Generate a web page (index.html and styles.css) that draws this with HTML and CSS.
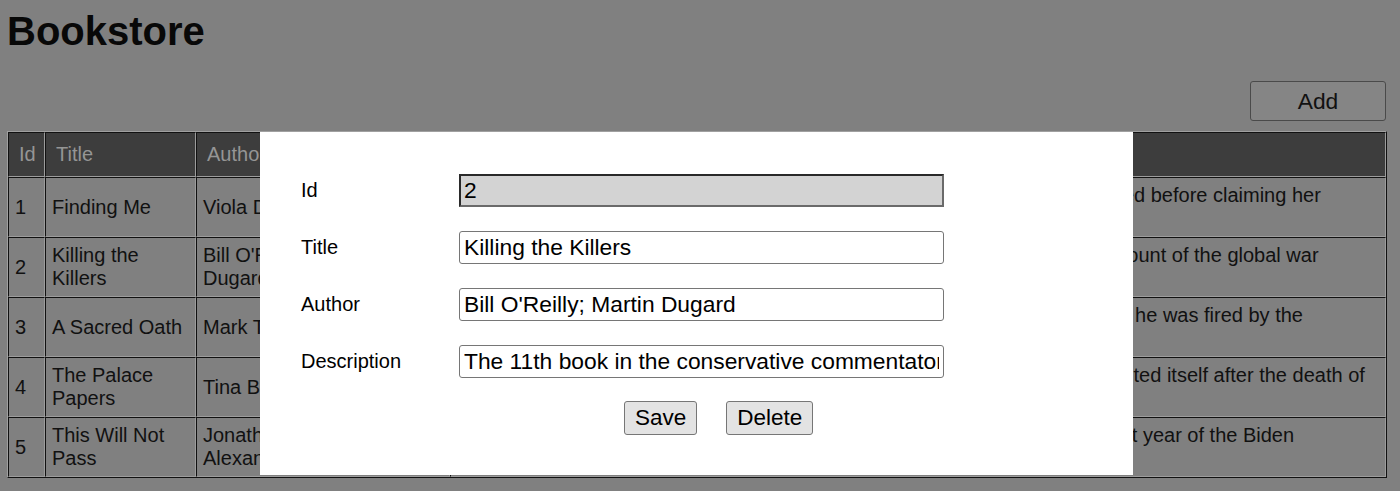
FILE: index.html
```html
<!DOCTYPE html>
<html lang="en">
<head>
<meta charset="utf-8">
<title>Bookstore</title>
<link rel="stylesheet" href="styles.css">
</head>
<body>
<div class="page">
  <h1 class="title">Bookstore</h1>
  <div class="toolbar">
    <button class="btn-add" type="button">Add</button>
  </div>
  <table class="books">
    <colgroup>
      <col class="col-id">
      <col class="col-title">
      <col class="col-author">
      <col class="col-desc">
    </colgroup>
    <thead>
      <tr class="head-row">
        <th>Id</th>
        <th>Title</th>
        <th>Author</th>
        <th>Description</th>
      </tr>
    </thead>
    <tbody>
      <tr>
        <td>1</td>
        <td>Finding Me</td>
        <td>Viola Davis</td>
        <td>The Oscar-winning actress describes her childhood and the path she followed before claiming her rightful place in Hollywood.</td>
      </tr>
      <tr>
        <td>2</td>
        <td>Killing the Killers</td>
        <td>Bill O'Reilly; Martin Dugard</td>
        <td>The 11th book in the conservative commentator’s Killing series gives an account of the global war against terrorism.</td>
      </tr>
      <tr>
        <td>3</td>
        <td>A Sacred Oath</td>
        <td>Mark T. Esper</td>
        <td>The ex-defense secretary recounts his time in the Trump administration until he was fired by the president in 2020.</td>
      </tr>
      <tr>
        <td>4</td>
        <td>The Palace Papers</td>
        <td>Tina Brown</td>
        <td>The former editor of Vanity Fair observes how the British royal family reinvented itself after the death of Princess Diana.</td>
      </tr>
      <tr>
        <td>5</td>
        <td>This Will Not Pass</td>
        <td>Jonathan Martin and Alexander Burns</td>
        <td>Two New York Times reporters chronicle the political infighting during the first year of the Biden presidency.</td>
      </tr>
    </tbody>
  </table>
</div>

<div class="modal">
  <form class="book-form">
    <label class="field-label" for="f-id">Id</label>
    <input class="field-input field-readonly" id="f-id" type="text" value="2" readonly>
    <label class="field-label" for="f-title">Title</label>
    <input class="field-input" id="f-title" type="text" value="Killing the Killers">
    <label class="field-label" for="f-author">Author</label>
    <input class="field-input" id="f-author" type="text" value="Bill O'Reilly; Martin Dugard">
    <label class="field-label" for="f-desc">Description</label>
    <input class="field-input" id="f-desc" type="text" value="The 11th book in the conservative commentator’s Killing series gives an account of the global war against terrorism.">
  </form>
  <div class="form-actions">
    <button class="btn-form" type="button">Save</button>
    <button class="btn-form" type="button">Delete</button>
  </div>
</div>
</body>
</html>
```

FILE: styles.css
```css
html, body {
  margin: 0;
  padding: 0;
}

body {
  background: #808080;
  color: #111;
  font-family: "Liberation Sans", Arial, sans-serif;
  font-size: 20px;
  line-height: 23px;
  height: 491px;
  overflow: hidden;
}

.page {
  padding: 8px 13px 0 7px;
}

.title {
  margin: 0;
  font-size: 40px;
  line-height: 46px;
  font-weight: bold;
  color: #080808;
}

.toolbar {
  display: flex;
  justify-content: flex-end;
  margin-top: 27px;
  margin-bottom: 10px;
  padding-right: 1px;
}

.btn-add {
  box-sizing: border-box;
  width: 136px;
  height: 40px;
  background: #858585;
  border: 1px solid #4a4a4a;
  border-radius: 3px;
  font-family: "Liberation Sans", Arial, sans-serif;
  font-size: 22.8px;
  color: #111;
  padding: 0;
}

.books {
  table-layout: fixed;
  width: 1380px;
  border-spacing: 0;
  border: 1px solid;
  border-color: #a0a0a0 #111 #111 #a0a0a0;
}

.col-id { width: 37px; }
.col-title { width: 151px; }
.col-author { width: 254px; }
.col-desc { width: 936px; }

.books th,
.books td {
  border: 1px solid;
  border-color: #111 #9c9c9c #9c9c9c #111;
  text-align: left;
  vertical-align: middle;
  overflow: hidden;
}

.books th {
  background: #3d3d3d;
  color: #959595;
  font-weight: normal;
  padding: 0 0 0 10px;
  white-space: nowrap;
}

.books td {
  padding: 0 10px 0 6px;
  color: #111;
}

.head-row {
  height: 45px;
}

.books tbody tr {
  height: 60px;
}

.modal {
  position: absolute;
  left: 260px;
  top: 132px;
  width: 873px;
  height: 343px;
  box-sizing: border-box;
  background: #fff;
  padding: 42px 0 0 41px;
}

.book-form {
  display: grid;
  grid-template-columns: 158px 485px;
  row-gap: 24px;
  align-items: center;
}

.field-label {
  color: #000;
  font-size: 20px;
  line-height: 23px;
}

.field-input {
  box-sizing: border-box;
  height: 33px;
  width: 485px;
  margin: 0;
  padding: 0 4px;
  border: 1px solid #767676;
  border-radius: 3px;
  background: #fff;
  color: #000;
  font-family: "Liberation Sans", Arial, sans-serif;
  font-size: 22.8px;
  outline: none;
}

.field-readonly {
  background: #d3d3d3;
  border: 2px solid;
  border-color: #2a2a2a #6a6a6a #6a6a6a #2a2a2a;
  border-radius: 0;
  padding: 0 3px;
}

.form-actions {
  display: flex;
  gap: 29px;
  margin-top: 23px;
  margin-left: 323px;
}

.btn-form {
  box-sizing: border-box;
  height: 34px;
  padding: 0 10px;
  background: #e3e3e3;
  border: 1px solid #767676;
  border-radius: 3px;
  color: #000;
  font-family: "Liberation Sans", Arial, sans-serif;
  font-size: 22.5px;
}
```
